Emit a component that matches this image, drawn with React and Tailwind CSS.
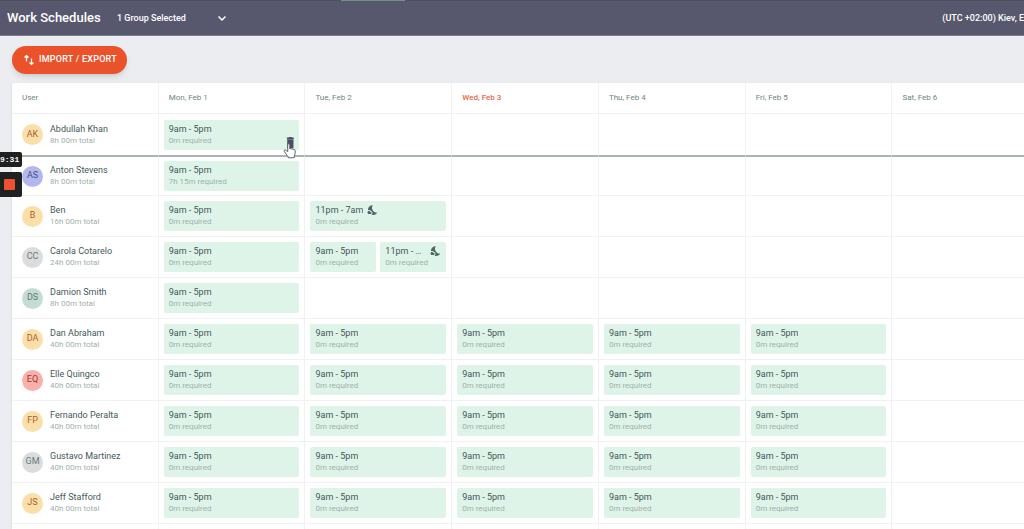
import React, { useState } from 'react';
import { MdNightsStay } from 'react-icons/md';

const days = ['Mon, Feb 1', 'Tue, Feb 2', 'Wed, Feb 3', 'Thu, Feb 4', 'Fri, Feb 5', 'Sat, Feb 6'];
const today = 'Wed, Feb 3';

const shift = { time: '9am - 5pm', required: '0m required' };
const nightShift = { time: '11pm - 7am', required: '0m required', night: true };
const fullWeek = [[shift], [shift], [shift], [shift], [shift]];

const yellow = 'bg-[#fbdfa9] text-[#a8602f]';
const gray = 'bg-[#dadcde] text-[#6b7b7b]';

const users = [
  { name: 'Abdullah Khan', initials: 'AK', total: '8h 00m total', color: yellow, week: [[shift]] },
  { name: 'Anton Stevens', initials: 'AS', total: '8h 00m total', color: 'bg-[#b3b7ef] text-[#47506f]', week: [[{ time: '9am - 5pm', required: '7h 15m required' }]] },
  { name: 'Ben', initials: 'B', total: '16h 00m total', color: yellow, week: [[shift], [nightShift]] },
  { name: 'Carola Cotarelo', initials: 'CC', total: '24h 00m total', color: gray, week: [[shift], [shift, nightShift]] },
  { name: 'Damion Smith', initials: 'DS', total: '8h 00m total', color: 'bg-[#c5dcd4] text-[#5f7b76]', week: [[shift]] },
  { name: 'Dan Abraham', initials: 'DA', total: '40h 00m total', color: yellow, week: fullWeek },
  { name: 'Elle Quingco', initials: 'EQ', total: '40h 00m total', color: 'bg-[#f8b0a8] text-[#9c3a2f]', week: fullWeek },
  { name: 'Fernando Peralta', initials: 'FP', total: '40h 00m total', color: yellow, week: fullWeek },
  { name: 'Gustavo Martinez', initials: 'GM', total: '40h 00m total', color: gray, week: fullWeek },
  { name: 'Jeff Stafford', initials: 'JS', total: '40h 00m total', color: yellow, week: fullWeek },
  { name: '', initials: '', total: '', color: '', week: [] },
];

function ShiftCard({ item, active }) {
  return (
    <div className="relative min-w-0 flex-1 h-[30px] rounded-xs bg-[#def4e8] pl-[5px] pr-1 pt-[3px]">
      <div className="flex items-center gap-1 h-3 text-[9px] leading-3 text-[#43565a]">
        <span className="truncate">{item.time}</span>
        {item.night && <MdNightsStay className="shrink-0 size-3 text-[#4b6663]" />}
      </div>
      <div className="h-3 text-[8px] leading-3 text-[#9fb0ab] whitespace-nowrap">{item.required}</div>
      {active && <DeleteCursor />}
    </div>
  );
}

// trash icon with the hand pointer on top of it
function DeleteCursor() {
  return (
    <svg className="absolute right-[3px] top-4 z-20" width="13" height="23" viewBox="0 0 12 22">
      <path d="M3.500 1.500h1.700L5.700 1h2.200l.5.500h1.700V3H3.500zM3.800 3.300h6v8.500h-6z" fill="#4b4c66" />
      <path
        d="M4.300 8.500c0-1.500 2-1.500 2 0v4c.3-.8 1.700-.7 1.800.2.400-.6 1.600-.4 1.700.4.500-.5 1.600-.2 1.600.8v2.600c0 1.400-.9 1.900-.9 3.300v1H4.700v-1c-.6-1-1.500-1.500-2-2.600L1 14.600c-.5-1 .8-1.900 1.700-1l1.600 1.600z"
        fill="#fff"
        stroke="#555a62"
        strokeWidth="0.9"
        strokeLinejoin="round"
      />
    </svg>
  );
}

function Header() {
  const [group, setGroup] = useState('1');

  return (
    <header className="relative flex items-center h-9 pl-[7px] bg-[#57586e] border-t border-b border-t-[#4d505f] border-b-[#7b7d89] text-white">
      <div className="absolute -top-px left-1/3 w-16 h-px bg-[#6c9484]" />
      <h1 className="w-[110px] shrink-0 text-[13px] leading-4 font-medium whitespace-nowrap">Work Schedules</h1>
      <div className="relative flex items-center w-[110px]">
        <select
          aria-label="Group"
          value={group}
          onChange={(e) => setGroup(e.target.value)}
          className="w-full appearance-none bg-transparent text-[9px] leading-4 font-medium outline-none"
        >
          <option value="1">1 Group Selected</option>
        </select>
        <svg className="absolute right-0 pointer-events-none" width="10" height="8" viewBox="0 0 10 8" fill="none" stroke="#fff" strokeWidth="1.500">
          <path d="M1.500 2.500 5 6l3.500-3.500" />
        </svg>
      </div>
      <button type="button" className="ml-auto text-[9px] leading-4 font-medium whitespace-nowrap">(UTC +02:00) Kiev, E</button>
    </header>
  );
}

function Recorder() {
  return (
    <div className="absolute left-0 top-[152px] z-30 flex flex-col gap-[5px] w-[22px]">
      <div className="h-[15px] rounded-r-xs bg-[#1f2020] text-[8px] leading-[15px] font-bold text-white font-['Liberation_Mono',monospace]">9:31</div>
      <button type="button" aria-label="Stop" className="flex items-center h-[25px] pl-1 rounded-r-xs bg-[#1f2020]">
        <span className="size-[11px] rounded-[1px] bg-[#ec5130]" />
      </button>
    </div>
  );
}

function App() {
  return (
    <div className="relative h-screen overflow-hidden bg-[#ecedf1] font-[Roboto,sans-serif]">
      <Header />
      <main className="pl-3">
        <div className="pt-[9px] pb-2">
          <button type="button" className="flex items-center gap-1 h-7 pl-[11px] pr-[10px] my-px rounded-full bg-[#e9522b] text-[9px] font-medium tracking-wide text-white shadow-md">
            <svg width="12" height="12" viewBox="0 0 12 12" fill="none" stroke="#fff" strokeWidth="1.200">
              <path d="M3.500 7.500v-6M1.500 3.500l2-2 2 2M8.500 4.500v6M6.500 8.500l2 2 2-2" />
            </svg>
            IMPORT / EXPORT
          </button>
        </div>
        <table className="w-[101.5%] table-fixed border-separate border-spacing-0 bg-white rounded-tl-xs shadow-sm">
          <thead>
            <tr className="h-[31px] text-left text-[8px] text-[#6f8581]">
              <th className="p-0 pl-[10px] font-normal border-b border-r border-[#f0f1f2]">User</th>
              {days.map((day) => (
                <th
                  key={day}
                  className={`p-0 pl-[10px] border-b border-r border-[#f0f1f2] ${day === today ? 'font-medium text-[#ea6444]' : 'font-normal'}`}
                >
                  {day}
                </th>
              ))}
            </tr>
          </thead>
          <tbody>
            {users.map((user, index) => {
              // the second row carries the thick drop line on its top edge
              const border = index === 0 ? '' : index === 1 ? 'border-t-2 border-t-[#a9b3b2] border-b border-b-[#f0f1f2]' : 'border-b border-b-[#f0f1f2]';
              return (
                <tr key={index} className="h-[41px]">
                  <td className={`p-0 pl-[10px] border-r border-r-[#f0f1f2] ${border}`}>
                    <div className="flex items-center gap-[7px]">
                      <div className={`flex items-center justify-center shrink-0 size-[21px] rounded-full text-[9px] ${user.color}`}>
                        {user.initials}
                      </div>
                      <div className="whitespace-nowrap">
                        <div className="text-[9px] leading-3 text-[#43595a]">{user.name}</div>
                        <div className="text-[8px] leading-3 text-[#9fb0ab]">{user.total}</div>
                      </div>
                    </div>
                  </td>
                  {days.map((day, d) => (
                    <td key={day} className={`p-0 px-[5px] border-r border-r-[#f0f1f2] ${border}`}>
                      <div className="flex gap-1">
                        {(user.week[d] || []).map((item, i) => (
                          <ShiftCard key={i} item={item} active={index === 0} />
                        ))}
                      </div>
                    </td>
                  ))}
                </tr>
              );
            })}
          </tbody>
        </table>
      </main>
      <Recorder />
    </div>
  );
}

export default App;
